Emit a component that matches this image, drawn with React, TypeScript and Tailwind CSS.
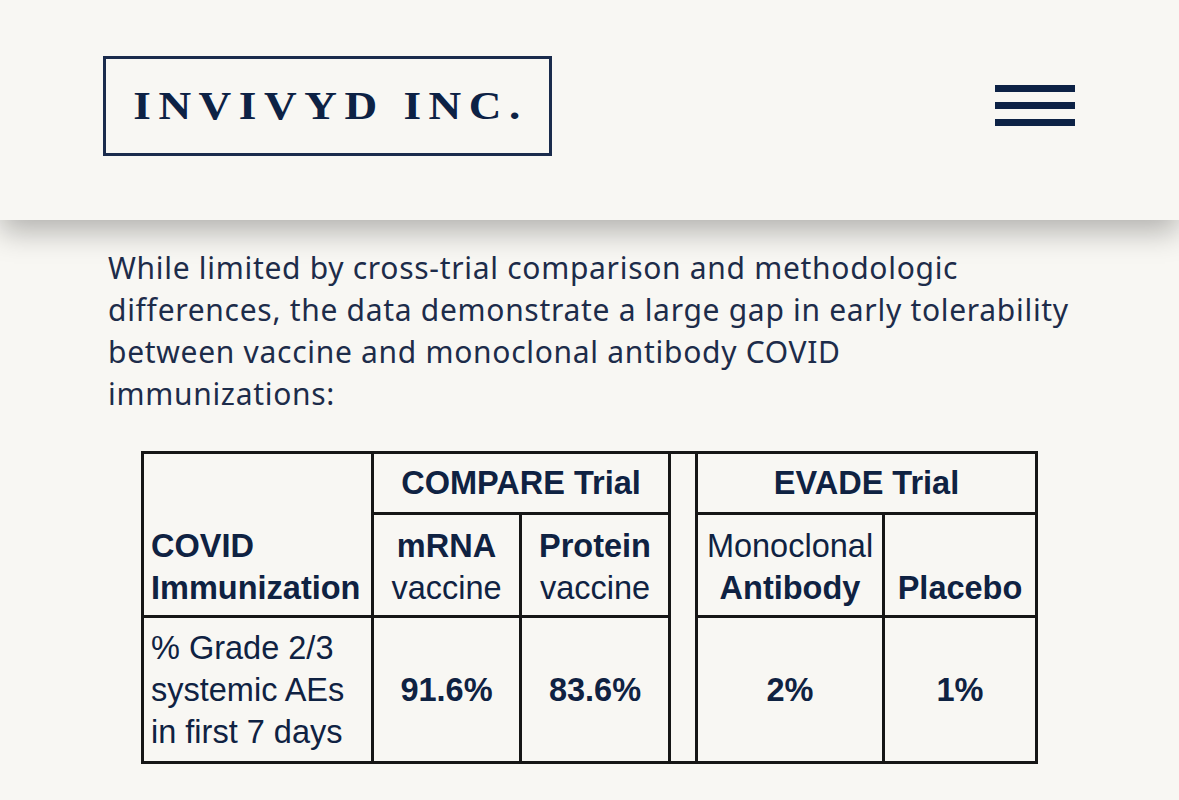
export default function App() {
  const cell = "border-[3px] border-[#161616]";
  return (
    <div className="min-h-[800px] w-[1179px] bg-[#f8f7f3] overflow-hidden">
      <header className="relative z-10 h-[220px] bg-[#f8f7f3] flex items-start justify-between pl-[103px] pr-[104px] pt-[56px] shadow-[0_12px_28px_rgba(0,0,0,0.28)]">
        <div className="w-[449px] h-[100px] border-[3px] border-[#1a2b4c] flex items-center justify-center">
          <span className="block scale-x-[1.16] text-[39px] font-bold tracking-[6.5px] text-[#0d2245] pl-[6px]" style={{ fontFamily: '"Liberation Serif", serif' }}>
            INVIVYD INC.
          </span>
        </div>
        <div className="mt-[29px] w-[80px] flex flex-col gap-[10px]">
          <div className="h-[7px] bg-[#0d2245]" />
          <div className="h-[7px] bg-[#0d2245]" />
          <div className="h-[7px] bg-[#0d2245]" />
        </div>
      </header>
      <main className="pl-[108px]">
        <p className="mt-[27px] w-[1000px] text-[30px] tracking-[0.7px] leading-[42px] text-[#1d2c4a]" style={{ fontFamily: '"Noto Sans", sans-serif' }}>
          While limited by cross-trial comparison and methodologic<br />
          differences, the data demonstrate a large gap in early tolerability<br />
          between vaccine and monoclonal antibody COVID<br />
          immunizations:
        </p>
        <table className="mt-[36px] ml-[33px] border-collapse text-[#0f2242] text-[32.5px] leading-[42px]" style={{ fontFamily: '"Liberation Sans", Arial, sans-serif' }}>
          <colgroup>
            <col className="w-[230px]" />
            <col className="w-[148px]" />
            <col className="w-[149px]" />
            <col className="w-[27px]" />
            <col className="w-[187px]" />
            <col className="w-[153px]" />
          </colgroup>
          <tbody>
            <tr className="h-[61px]">
              <td rowSpan={2} className={`${cell} align-bottom text-left font-bold px-[7px] pb-[6px] whitespace-nowrap`}>
                COVID<br />Immunization
              </td>
              <td colSpan={2} className={`${cell} text-center font-bold`}>COMPARE Trial</td>
              <td rowSpan={3} className={cell}></td>
              <td colSpan={2} className={`${cell} text-center font-bold`}>EVADE Trial</td>
            </tr>
            <tr className="h-[103px]">
              <td className={`${cell} text-center pb-[6px] align-bottom`}>
                <span className="font-bold">mRNA</span><br />vaccine
              </td>
              <td className={`${cell} text-center pb-[6px] align-bottom`}>
                <span className="font-bold">Protein</span><br />vaccine
              </td>
              <td className={`${cell} text-center pb-[6px] align-bottom whitespace-nowrap`}>
                Monoclonal<br /><span className="font-bold">Antibody</span>
              </td>
              <td className={`${cell} text-center pb-[6px] align-bottom font-bold`}>Placebo</td>
            </tr>
            <tr className="h-[146px]">
              <td className={`${cell} text-left px-[7px] align-middle whitespace-nowrap`}>
                % Grade 2/3<br />systemic AEs<br />in first 7 days
              </td>
              <td className={`${cell} text-center font-bold`}>91.6%</td>
              <td className={`${cell} text-center font-bold`}>83.6%</td>
              <td className={`${cell} text-center font-bold`}>2%</td>
              <td className={`${cell} text-center font-bold`}>1%</td>
            </tr>
          </tbody>
        </table>
      </main>
    </div>
  );
}
